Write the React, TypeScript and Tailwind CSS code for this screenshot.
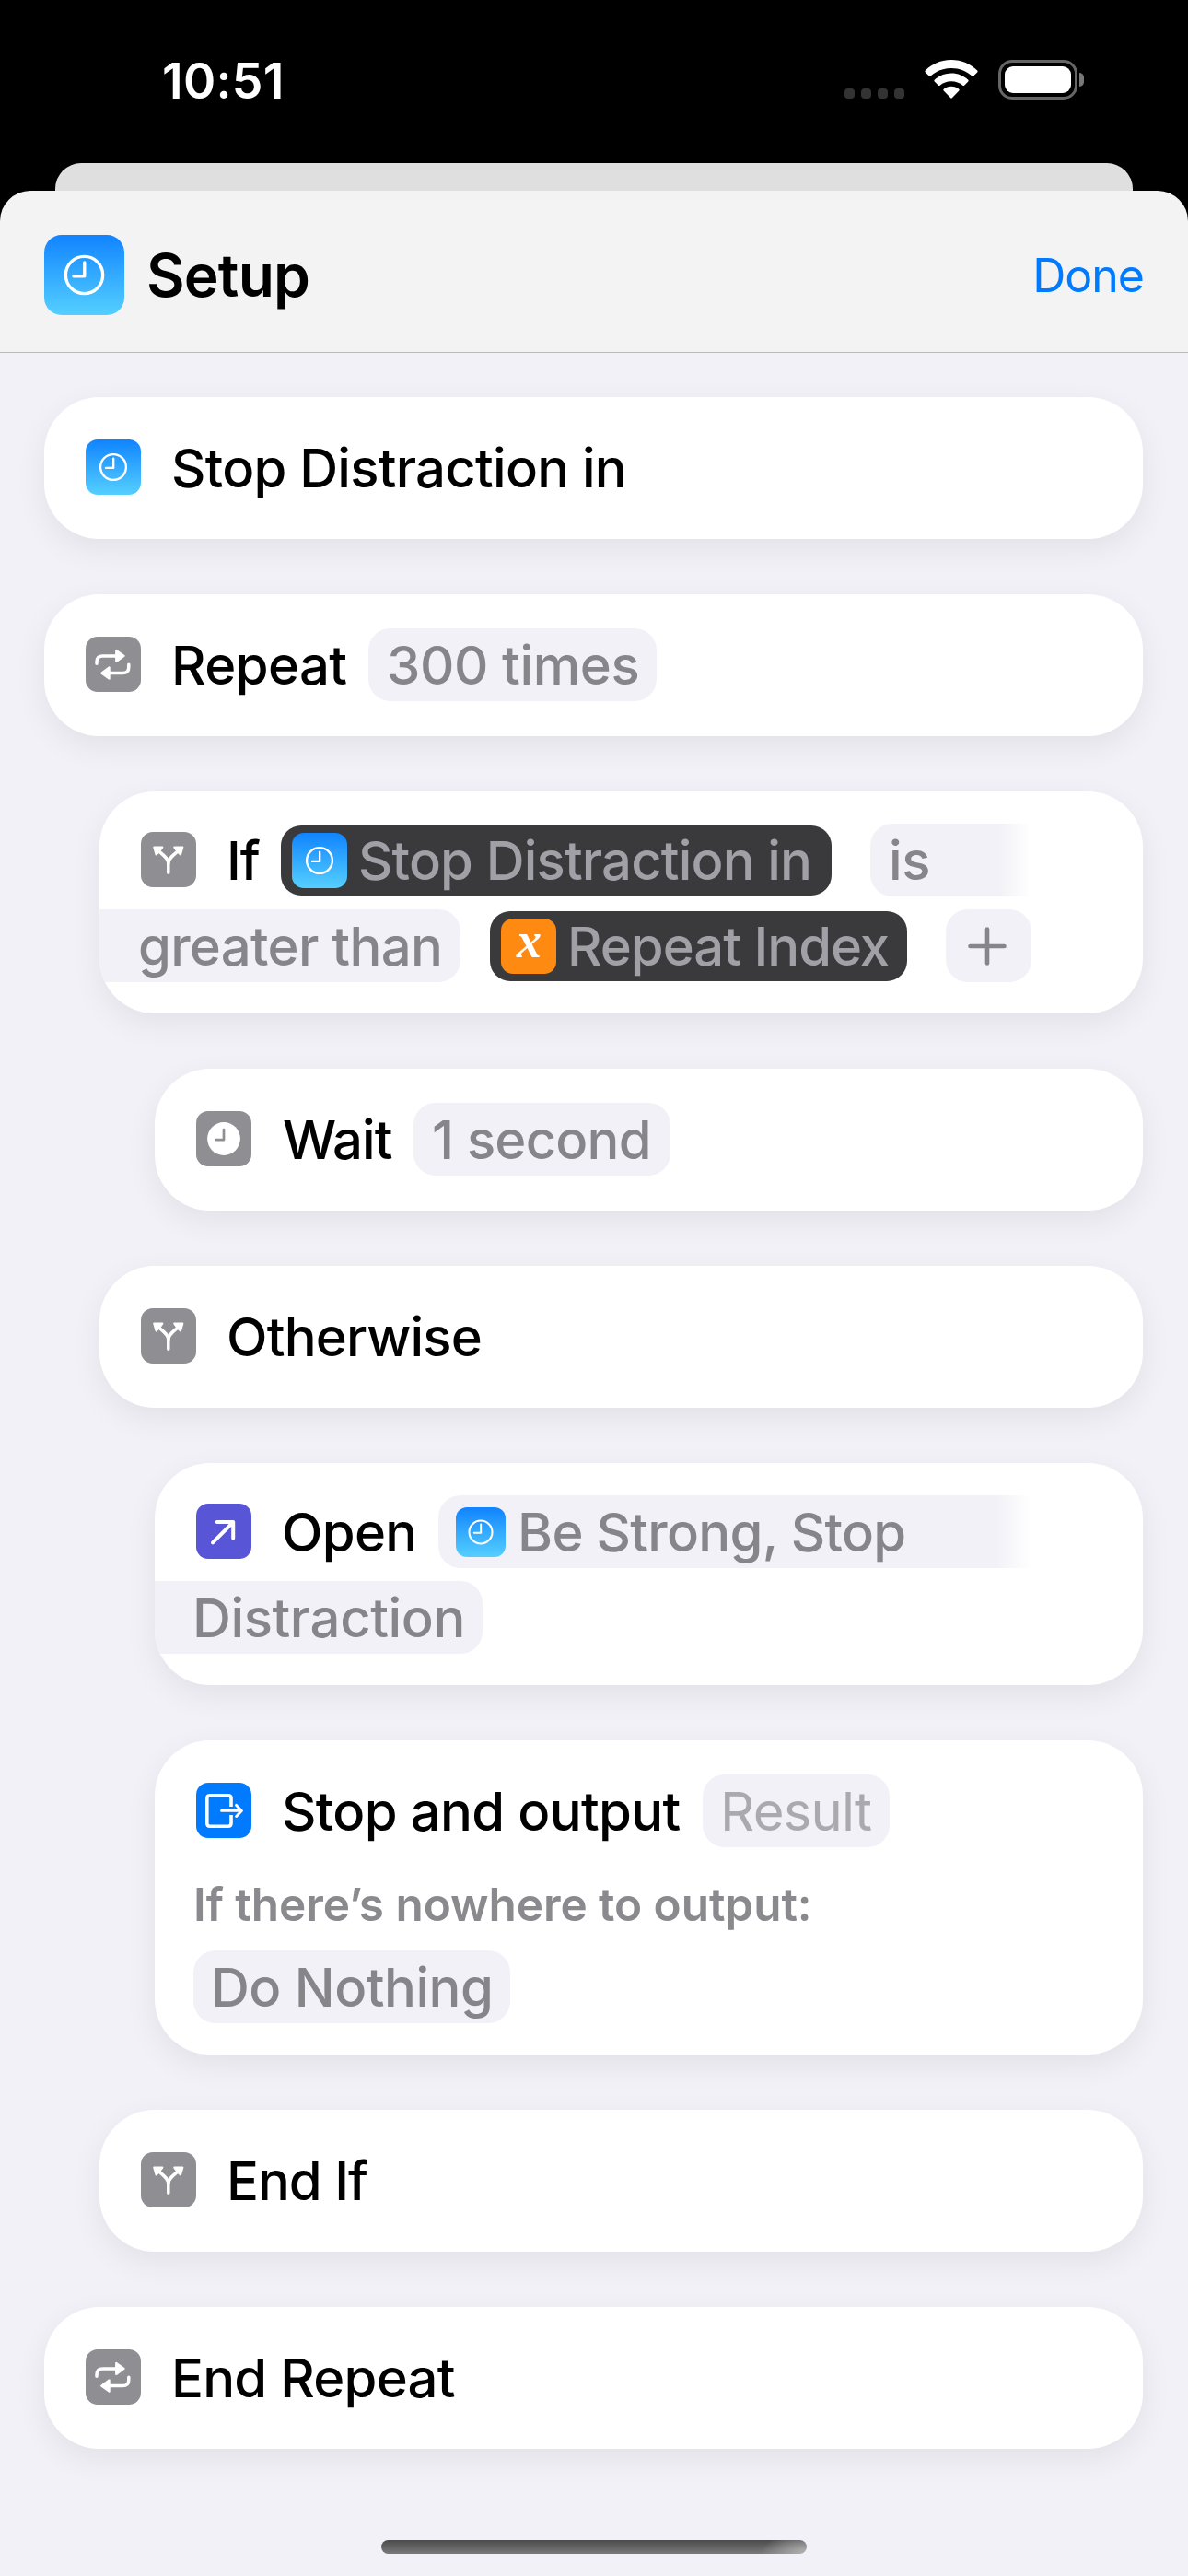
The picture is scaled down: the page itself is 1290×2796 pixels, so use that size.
import React from "react";

type IconProps = { className?: string };

/* ---------- Action glyphs, drawn on a 60-unit tile ---------- */

function ClockTile({ className = "size-[60px] rounded-[13px]" }: IconProps) {
  return (
    <span className={`block shrink-0 bg-linear-to-b from-[#1083ff] to-[#55cfff] ${className}`}>
      <svg viewBox="0 0 60 60" className="block size-full" fill="none" stroke="#fff" strokeWidth="2.3" strokeLinecap="round" strokeLinejoin="round">
        <circle cx="30" cy="30" r="13.9" />
        <path d="M30.2 20.6V30.9H22" />
      </svg>
    </span>
  );
}

function RepeatTile() {
  return (
    <span className="-mt-px block size-[60px] shrink-0 rounded-[13px] bg-[#8e8e93]">
      <svg viewBox="0 0 60 60" className="block size-full" fill="none" stroke="#fff" strokeWidth="3.5" strokeLinecap="round">
        <path d="M12 29.3V27.5Q12 20.9 18.6 20.9H34" />
        <path d="M46.8 30.2V33Q46.8 39.600 40.200 39.600H25" />
        <path d="M33.2 14.800V27L41.600 20.900Z" fill="#fff" strokeWidth="2.2" strokeLinejoin="round" />
        <path d="M25.600 33.500V45.700L17.200 39.600Z" fill="#fff" strokeWidth="2.2" strokeLinejoin="round" />
      </svg>
    </span>
  );
}

function BranchTile() {
  return (
    <span className="-mt-px block size-[60px] shrink-0 rounded-[13px] bg-[#8e8e93]">
      <svg viewBox="0 0 60 60" className="block size-full" fill="none" stroke="#fff" strokeWidth="3.5" strokeLinecap="round" strokeLinejoin="round">
        <path d="M29.8 44.3V34C29.8 28.500 24.500 25.500 19 20.500" />
        <path d="M29.8 34C29.8 28.500 35.100 25.500 40.600 20.500" />
        <path d="M14.300 16.500L23.300 16.700L20.600 20.400L16.600 24.400Z" fill="#fff" strokeWidth="2.2" />
        <path d="M45.300 16.500L36.300 16.700L39 20.400L43 24.400Z" fill="#fff" strokeWidth="2.2" />
      </svg>
    </span>
  );
}

function WaitTile() {
  return (
    <span className="-mt-px block size-[60px] shrink-0 rounded-[13px] bg-[#8e8e93]">
      <svg viewBox="0 0 60 60" className="block size-full" fill="none">
        <circle cx="30" cy="30" r="17.9" fill="#fff" />
        <path d="M30 20V31.2H21.5" stroke="#8e8e93" strokeWidth="2.7" strokeLinecap="round" strokeLinejoin="round" />
      </svg>
    </span>
  );
}

function OpenTile() {
  return (
    <span className="-mt-px block size-[60px] shrink-0 rounded-[13px] bg-[#5856d6]">
      <svg viewBox="0 0 60 60" className="block size-full" fill="none" stroke="#fff" strokeWidth="4" strokeLinecap="round" strokeLinejoin="round">
        <path d="M18 42.3L40 20.3M22.7 20H40.2V37.4" />
      </svg>
    </span>
  );
}

function OutputTile() {
  return (
    <span className="-mt-px block size-[60px] shrink-0 rounded-[13px] bg-[#007aff]">
      <svg viewBox="0 0 60 60" className="block size-full" fill="none" stroke="#fff" strokeWidth="3.6" strokeLinejoin="round">
        <path d="M38 26V17Q38 13.8 34.8 13.8H15Q11.8 13.8 11.8 17V44Q11.8 47.2 15 47.2H34.8Q38 47.2 38 44V35" />
        <path d="M27.5 30.4H49M43.6 24.4L49.4 30.4L43.6 36.4" strokeWidth="2.9" strokeLinecap="round" />
      </svg>
    </span>
  );
}

function VariableTile() {
  return (
    <span className="flex size-[60px] shrink-0 justify-center rounded-[13px] bg-[#ff8a12] font-['Liberation_Serif',serif] text-[54px] leading-[49px] font-bold text-white italic">
      x
    </span>
  );
}

/* ---------- Building blocks ---------- */

function Card({ className, children }: { className: string; children: React.ReactNode }) {
  return (
    <section
      className={`flex shrink-0 flex-col overflow-hidden rounded-[60px] bg-white shadow-[0_11px_34px_rgba(0,0,0,0.068)] ${className}`}
    >
      {children}
    </section>
  );
}

function Row({ className = "", children }: { className?: string; children: React.ReactNode }) {
  return <div className={`flex h-[79px] shrink-0 items-center ${className}`}>{children}</div>;
}

function Label({ className = "", children }: { className?: string; children: React.ReactNode }) {
  return <span className={`font-medium whitespace-nowrap ${className}`}>{children}</span>;
}

function Pill({ className, children }: { className: string; children: React.ReactNode }) {
  return (
    <span className={`flex h-[79px] shrink-0 items-center bg-[#f2f1f7] whitespace-nowrap ${className}`}>
      {children}
    </span>
  );
}

function Token({ className, children }: { className: string; children: React.ReactNode }) {
  return (
    <span className={`flex h-[76px] shrink-0 items-center rounded-[22px] bg-[#3a3a3c] pl-3 font-medium whitespace-nowrap text-[#a1a0a7] ${className}`}>
      {children}
    </span>
  );
}

/* ---------- Status bar ---------- */

function StatusBar() {
  return (
    <div className="flex h-[177px] shrink-0 items-start justify-between pt-[65px] pr-[113px] pl-[176px]">
      <span className="mt-[-8px] text-[53.5px] leading-[62px] font-semibold tracking-[0.3px] text-white">10:51</span>
      <div className="flex items-start">
        <div className="mt-[31px] flex gap-[7px]">
          <i className="size-[11px] rounded-[4px] bg-[#333]" />
          <i className="size-[11px] rounded-[4px] bg-[#333]" />
          <i className="size-[11px] rounded-[4px] bg-[#333]" />
          <i className="size-[11px] rounded-[4px] bg-[#333]" />
        </div>
        <svg viewBox="0 0 58 43" className="ml-[22px] h-[43px] w-[58px]" fill="#fff">
          <path d="M29 0C18 0 8 4.300 .8 11.600Q0 12.500 .8 13.400L4.900 17.600Q5.700 18.400 6.500 17.600C12.500 12 20.400 8.900 29 8.900S45.500 12 51.500 17.600Q52.300 18.400 53.100 17.600L57.200 13.400Q58 12.500 57.200 11.600C50 4.300 40 0 29 0Z" />
          <path d="M29 14.500C22 14.500 15.500 17.200 10.700 21.700Q9.900 22.600 10.700 23.500L14.900 27.700Q15.700 28.500 16.600 27.700C19.900 24.800 24.300 23.200 29 23.200S38.100 24.800 41.400 27.700Q42.300 28.500 43.100 27.700L47.300 23.500Q48.100 22.600 47.300 21.700C42.500 17.200 36 14.500 29 14.500Z" />
          <path d="M29 28.800C25.900 28.800 23 29.900 20.700 31.800Q19.800 32.700 20.700 33.600L28.200 41.300Q29 42.100 29.800 41.300L37.300 33.600Q38.200 32.700 37.300 31.800C35 29.900 32.100 28.800 29 28.800Z" />
        </svg>
        <div className="ml-[22px] flex h-[43px] w-[86px] rounded-[15px] border-[3px] border-[#666] p-1">
          <div className="flex-1 rounded-[9px] bg-white" />
        </div>
        <i className="mt-3.5 ml-[2px] h-[15px] w-[5px] rounded-r-full bg-[#777]" />
      </div>
    </div>
  );
}

export default function App() {
  return (
    <div className="flex h-[2796px] w-[1290px] flex-col overflow-hidden bg-black font-['Inter',sans-serif] text-[58px] leading-[70px] text-black">
      <StatusBar />
      <div className="mx-[60px] h-[30px] shrink-0 rounded-t-[28px] bg-[#dfdfdf]" />

      <div className="flex flex-1 flex-col bg-[linear-gradient(#000_0_60px,#f2f1f7_60px)]">
        <header className="flex h-[176px] shrink-0 items-center rounded-t-[33px] border-b border-[#b9b9bc] bg-[#f3f3f3] px-12 pb-px">
          <ClockTile className="mt-[8px] size-[87px] rounded-[19px]" />
          <h1 className="mt-[10px] ml-[24px] flex-1 text-[64px] leading-[80px] font-semibold tracking-[-0.8px]">Setup</h1>
          <span className="mt-[10px] text-[50px] tracking-[-1px] text-[#007aff]">Done</span>
        </header>

        <main className="flex flex-col gap-[60px] pt-12 pr-[49px]">
          <Card className="ml-12 h-[154px] pt-[37px]">
            <Row className="pl-[45px]">
              <ClockTile className="-mt-px size-[60px] rounded-[13px]" />
              <Label className="ml-[33px] tracking-[-0.75px]">Stop Distraction in</Label>
            </Row>
          </Card>

          <Card className="ml-12 h-[154px] pt-[37px]">
            <Row className="pl-[45px]">
              <RepeatTile />
              <Label className="ml-[33px] w-[214px] tracking-[-0.6px]">Repeat</Label>
              <Pill className="w-[313px] rounded-[24px] pl-[20px] font-medium tracking-[-0.4px] text-[#86858a]">300 times</Pill>
            </Row>
          </Card>

          <Card className="ml-[108px] h-[241px] pt-[35px]">
            <Row className="pl-[45px]">
              <BranchTile />
              <Label className="ml-[33px] w-[59px] tracking-[-1px]">If</Label>
              <Token className="w-[598px] tracking-[-0.85px]">
                <ClockTile />
                <span className="ml-[12px]">Stop Distraction in</span>
              </Token>
              <Pill className="ml-[42px] w-[175px] rounded-l-[24px] bg-transparent bg-linear-to-r from-[#f2f1f7] from-80% to-white pl-[20px] font-medium tracking-[-0.4px] text-[#86858a]">is</Pill>
            </Row>
            <Row className="mt-[14px]">
              <Pill className="w-[392px] rounded-r-[24px] pl-[42px] font-medium tracking-[-0.7px] text-[#86858a]">greater than</Pill>
              <Token className="ml-[32px] w-[453px] tracking-[-1px]">
                <VariableTile />
                <span className="ml-[12px]">Repeat Index</span>
              </Token>
              <Pill className="ml-[42px] w-[93px] justify-center rounded-[24px] pr-[3px]">
                <svg viewBox="0 0 42 42" className="size-[42px]" stroke="#86858a" strokeWidth="4.600" strokeLinecap="round">
                  <path d="M21 2.500V39.500M2.500 21H39.500" />
                </svg>
              </Pill>
            </Row>
          </Card>

          <Card className="ml-[168px] h-[154px] pt-[37px]">
            <Row className="pl-[45px]">
              <WaitTile />
              <Label className="ml-[34px] w-[142px] tracking-[-1px]">Wait</Label>
              <Pill className="w-[279px] rounded-[24px] pl-[20px] font-medium tracking-[-0.8px] text-[#86858a]">1 second</Pill>
            </Row>
          </Card>

          <Card className="ml-[108px] h-[154px] pt-[37px]">
            <Row className="pl-[45px]">
              <BranchTile />
              <Label className="ml-[33px] tracking-[-0.8px]">Otherwise</Label>
            </Row>
          </Card>

          <Card className="ml-[168px] h-[241px] pt-[35px]">
            <Row className="pl-[45px]">
              <OpenTile />
              <Label className="ml-[33px] w-[170px] tracking-[-0.7px]">Open</Label>
              <Pill className="w-[644px] rounded-l-[24px] bg-transparent bg-linear-to-r from-[#f2f1f7] from-94% to-white pl-[19px] font-medium tracking-[-0.7px] text-[#86858a]">
                <ClockTile className="size-[54px] rounded-[12px]" />
                <span className="ml-[13px]">Be Strong, Stop</span>
              </Pill>
            </Row>
            <Row className="mt-[14px]">
              <Pill className="w-[356px] rounded-r-[24px] pl-[41px] font-medium tracking-[-0.4px] text-[#86858a]">Distraction</Pill>
            </Row>
          </Card>

          <Card className="ml-[168px] h-[341px] pt-[37px]">
            <Row className="pl-[45px]">
              <OutputTile />
              <Label className="ml-[33px] w-[457px] tracking-[-0.65px]">Stop and output</Label>
              <Pill className="w-[203px] rounded-[24px] pl-[19px] tracking-[-0.8px] text-[#aaa9ae]">Result</Pill>
            </Row>
            <p className="mt-[32px] pl-[42px] text-[49.5px] leading-[60px] font-semibold tracking-[-0.05px] text-[#8a8a8e]">If there’s nowhere to output:</p>
            <Row className="mt-[20px] pl-[42px]">
              <Pill className="w-[344px] rounded-[24px] pl-[19px] font-medium tracking-[-0.5px] text-[#86858a]">Do Nothing</Pill>
            </Row>
          </Card>

          <Card className="ml-[108px] h-[154px] pt-[37px]">
            <Row className="pl-[45px]">
              <BranchTile />
              <Label className="ml-[33px] tracking-[-1px]">End If</Label>
            </Row>
          </Card>

          <Card className="ml-12 h-[154px] pt-[37px]">
            <Row className="pl-[45px]">
              <RepeatTile />
              <Label className="ml-[33px] tracking-[-0.75px]">End Repeat</Label>
            </Row>
          </Card>
        </main>

        <div className="mt-[99px] ml-[414px] h-[15px] w-[462px] rounded-full bg-[radial-gradient(50px_24px_at_100%_100%,#b5b5b5,transparent),linear-gradient(#4b4b4b,#7a7a7a)]" />
      </div>
    </div>
  );
}
